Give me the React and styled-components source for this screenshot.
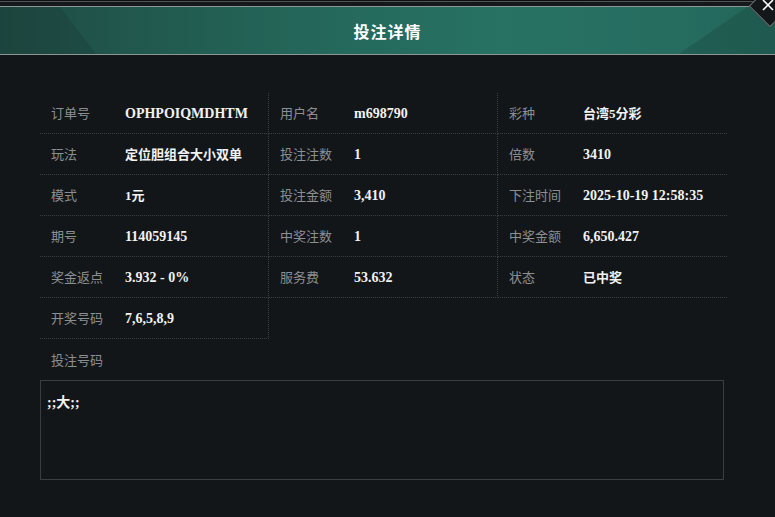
import React from 'react';
import styled, { createGlobalStyle } from 'styled-components';

const GlobalStyle = createGlobalStyle`
  html, body {
    margin: 0;
    padding: 0;
    background: #131619;
  }
  * { box-sizing: border-box; }
`;

const Page = styled.div`
  position: relative;
  min-height: 517px;
  background: #131619;
  overflow: hidden;
`;

const TopStrip = styled.div`
  height: 6px;
  background: linear-gradient(to bottom, #0e1012 0 1px, #4f5356 1px 2px, #16191b 2px 100%);
`;

const Header = styled.div`
  position: relative;
  height: 49px;
  border-top: 1px solid #8d9896;
  border-bottom: 1px solid #8d9896;
  background: linear-gradient(90deg, #1f4b44 0%, #21564c 15%, #24675a 40%, #277263 65%, #266d60 85%, #23665a 100%);
  display: flex;
  align-items: center;
  justify-content: center;

  &::before {
    content: '';
    position: absolute;
    inset: 0;
    background: rgba(18, 45, 40, 0.22);
    clip-path: polygon(0 0, 60px 0, 96px 100%, 0 100%);
  }

  &::after {
    content: '';
    position: absolute;
    inset: 0;
    background: rgba(18, 45, 40, 0.22);
    clip-path: polygon(calc(100% - 28px) 0, 100% 0, 100% 100%, calc(100% - 96px) 100%);
  }
`;

const Title = styled.h1`
  position: relative;
  z-index: 1;
  margin: 0;
  font-family: "Noto Sans CJK SC", "Noto Sans", sans-serif;
  font-size: 16px;
  font-weight: 700;
  letter-spacing: 1px;
  color: #ffffff;
`;

const CloseButton = styled.button`
  position: absolute;
  top: -9px;
  right: -10px;
  width: 30px;
  height: 30px;
  padding: 0;
  display: flex;
  align-items: center;
  justify-content: center;
  background: #14171a;
  border: 1px solid #6a6f72;
  transform: rotate(45deg);
  cursor: pointer;
  z-index: 2;

  svg {
    display: block;
    transform: rotate(-45deg) translate(-2px, -1px);
  }
`;

const Body = styled.div`
  padding: 38px 48px 0 40px;
`;

const Grid = styled.div`
  display: grid;
  grid-template-columns: 229px 229px 229px;
`;

const Cell = styled.div`
  height: 41px;
  line-height: 40px;
  padding-left: 11px;
  white-space: nowrap;
  border-bottom: 1px dotted #3b3f43;
  border-right: ${p => (p.$last ? 'none' : '1px dotted #3b3f43')};
`;

const Label = styled.span`
  display: inline-block;
  width: 74px;
  font-family: "Noto Sans CJK SC", "Noto Sans", sans-serif;
  font-size: 13px;
  color: #8c8f92;
`;

const Value = styled.span`
  font-family: "Liberation Serif", "Noto Sans CJK SC", serif;
  font-size: ${p => (p.$cjk ? '13px' : '14px')};
  font-weight: 700;
  color: #f2f2f2;
`;

const NumbersLabel = styled(Label)`
  display: block;
  padding: 11px 0 0 11px;
  height: 41px;
  line-height: 20px;
`;

const NumbersBox = styled.div`
  width: 684px;
  height: 100px;
  padding: 10px 6px;
  border: 1px solid #3a3e41;
  font-family: "Liberation Serif", "Noto Sans CJK SC", serif;
  font-size: 14px;
  font-weight: 700;
  color: #f2f2f2;
`;

const rows = [
  [['订单号', 'OPHPOIQMDHTM'], ['用户名', 'm698790'], ['彩种', '台湾5分彩']],
  [['玩法', '定位胆组合大小双单'], ['投注注数', '1'], ['倍数', '3410']],
  [['模式', '1元'], ['投注金额', '3,410'], ['下注时间', '2025-10-19 12:58:35']],
  [['期号', '114059145'], ['中奖注数', '1'], ['中奖金额', '6,650.427']],
  [['奖金返点', '3.932 - 0%'], ['服务费', '53.632'], ['状态', '已中奖']],
  [['开奖号码', '7,6,5,8,9']],
];

const hasCjk = s => /[\u4e00-\u9fff]/.test(s);

export default function App() {
  return (
    <Page>
      <GlobalStyle />
      <TopStrip />
      <Header>
        <Title>投注详情</Title>
      </Header>
      <CloseButton aria-label="关闭">
        <svg width="12" height="12" viewBox="0 0 12 12">
          <path d="M1 1 L11 11 M11 1 L1 11" stroke="#ffffff" strokeWidth="1.6" />
        </svg>
      </CloseButton>
      <Body>
        <Grid>
          {rows.map((row, i) =>
            row.map(([label, value], j) => (
              <Cell key={`${i}-${j}`} $last={j === 2}>
                <Label>{label}</Label>
                <Value $cjk={hasCjk(value)}>{value}</Value>
              </Cell>
            ))
          )}
        </Grid>
        <NumbersLabel>投注号码</NumbersLabel>
        <NumbersBox>;;大;;</NumbersBox>
      </Body>
    </Page>
  );
}
